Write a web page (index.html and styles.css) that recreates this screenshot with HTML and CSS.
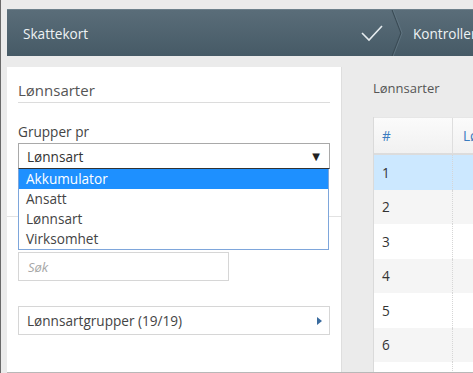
FILE: index.html
```html
<!DOCTYPE html>
<html lang="no">
<head>
<meta charset="utf-8">
<link rel="stylesheet" href="styles.css">
</head>
<body>
<div class="app">
  <div class="header">
    <div class="step-title">Skattekort</div>
    <svg class="check" width="24" height="18" viewBox="0 0 24 18"><polyline points="2,9 9,16 22,2" fill="none" stroke="#e6ecef" stroke-width="1.6"/></svg>
    <svg class="chev" width="12" height="47" viewBox="0 0 12 47"><polyline points="1,0 10,23.5 1,47" fill="none" stroke="#3b4c56" stroke-width="1.2"/><polyline points="2.2,0 11.2,23.5 2.2,47" fill="none" stroke="#647985" stroke-width="0.8"/></svg>
    <div class="step-next">Kontroller</div>
  </div>
  <div class="main">
    <div class="left">
      <div class="sec1">
        <div class="panel-title">Lønnsarter</div>
        <div class="field-label">Grupper pr</div>
        <div class="select-wrap">
          <div class="select"><span>Lønnsart</span><span class="arrow">▼</span></div>
          <ul class="options">
            <li class="opt active">Akkumulator</li>
            <li class="opt">Ansatt</li>
            <li class="opt">Lønnsart</li>
            <li class="opt">Virksomhet</li>
          </ul>
        </div>
      </div>
      <div class="sec2">
        <div class="search">Søk</div>
        <div class="groups"><span>Lønnsartgrupper (19/19)</span><svg class="tri" width="5" height="8" viewBox="0 0 5 8"><polygon points="0,0 5,4 0,8" fill="#3a6b9e"/></svg></div>
      </div>
    </div>
    <div class="right">
      <div class="right-title">Lønnsarter</div>
      <div class="table">
        <div class="row head"><div class="c1">#</div><div class="c2">Lønnsart</div></div>
        <div class="row sel"><div class="c1">1</div><div class="c2"></div></div>
        <div class="row alt"><div class="c1">2</div><div class="c2"></div></div>
        <div class="row"><div class="c1">3</div><div class="c2"></div></div>
        <div class="row alt"><div class="c1">4</div><div class="c2"></div></div>
        <div class="row"><div class="c1">5</div><div class="c2"></div></div>
        <div class="row alt"><div class="c1">6</div><div class="c2"></div></div>
        <div class="row"><div class="c1"></div><div class="c2"></div></div>
      </div>
    </div>
  </div>
</div>
</body>
</html>
```
FILE: styles.css
```css
html, body {
  margin: 0;
  padding: 0;
  height: 100%;
  overflow: hidden;
}
body {
  background: #ebebeb;
  font-family: "Open Sans", "DejaVu Sans", sans-serif;
  color: #444;
  border-left: 1px solid #6a6a6a;
  box-sizing: border-box;
}
.app {
  padding: 9px 0 0 6px;
  height: 373px;
  box-sizing: border-box;
}
.header {
  height: 47px;
  background: linear-gradient(#5a6d79, #465a66);
  border-top: 1px solid #6d808b;
  box-sizing: border-box;
  display: flex;
  align-items: center;
  white-space: nowrap;
  overflow: hidden;
}
.step-title {
  color: #eef2f4;
  font-size: 13.6px;
  padding-left: 16px;
  flex: 1;
}
.check {
  flex: none;
  margin-right: 7px;
}
.chev {
  flex: none;
  align-self: stretch;
  height: 46px;
  margin-right: 10px;
}
.step-next {
  flex: none;
  width: 60px;
  color: #eef2f4;
  font-size: 13.6px;
}
.main {
  margin-top: 11px;
  display: flex;
  height: 306px;
  border-bottom: 1px solid #b8b8b8;
  box-sizing: border-box;
}
.left {
  width: 335px;
  flex: none;
  background: #fff;
  border-right: 1px solid #dedede;
  box-sizing: border-box;
}
.sec1 {
  height: 150px;
  box-sizing: border-box;
  border-bottom: 1px solid #e2e2e2;
  padding: 13px 11px 0 11px;
}
.panel-title {
  font-size: 15px;
  line-height: 20px;
  color: #555;
  border-bottom: 1px solid #dcdcdc;
  padding-bottom: 2px;
}
.field-label {
  font-size: 13.6px;
  line-height: 18px;
  margin-top: 20px;
  color: #444;
}
.select-wrap {
  position: relative;
  margin-top: 2px;
}
.select {
  height: 26px;
  border: 1px solid #a9a9a9;
  border-bottom-color: #333;
  box-sizing: border-box;
  display: flex;
  align-items: center;
  justify-content: space-between;
  padding: 0 9px 0 8px;
  font-size: 13.6px;
  color: #333;
}
.arrow {
  font-size: 10px;
  color: #222;
}
.options {
  position: absolute;
  top: 26px;
  left: 0;
  width: 311px;
  margin: 0;
  padding: 0;
  list-style: none;
  background: #fff;
  border: 1px solid #7ea6db;
  border-top: none;
  box-sizing: border-box;
  z-index: 2;
}
.opt {
  height: 20px;
  line-height: 20px;
  font-size: 13.6px;
  padding-left: 7px;
  color: #444;
}
.opt.active {
  background: #1e90ff;
  color: #fff;
}
.sec2 {
  padding: 35px 11px 0 11px;
}
.search {
  width: 211px;
  height: 29px;
  border: 1px solid #d6d6d6;
  box-sizing: border-box;
  font-size: 13px;
  font-style: italic;
  color: #a6a6a6;
  padding-left: 9px;
  display: flex;
  align-items: center;
}
.groups {
  margin-top: 25px;
  height: 29px;
  border: 1px solid #d6d6d6;
  box-sizing: border-box;
  display: flex;
  align-items: center;
  justify-content: space-between;
  padding: 0 7px 0 8px;
  font-size: 13.6px;
  color: #444;
}
.right {
  flex: 1;
  padding-left: 31px;
  overflow: hidden;
}
.right-title {
  font-size: 13px;
  line-height: 18px;
  color: #555;
  margin-top: 12px;
}
.table {
  margin-top: 20px;
  border-left: 1px solid #dadada;
  width: 200px;
}
.row {
  display: flex;
  height: 34.5px;
  background: #fff;
  font-size: 13.6px;
  color: #333;
}
.row .c1 {
  width: 79px;
  box-sizing: border-box;
  padding-left: 8px;
  display: flex;
  align-items: center;
  border-right: 1px dotted #d6d6d6;
}
.row .c2 {
  flex: 1;
  padding-left: 10px;
  display: flex;
  align-items: center;
  white-space: nowrap;
}
.row.head {
  height: 38px;
  background: linear-gradient(#fbfbfb, #f1f1f1);
  border-bottom: 2px solid #dcdcdc;
  border-top: 1px solid #e6e6e6;
  box-sizing: border-box;
  color: #3a7cc0;
}
.row.head .c1 {
  border-right: 1px solid #dedede;
}
.row.sel {
  background: #cce8ff;
}
.row.alt {
  background: #f5f5f5;
}
```
